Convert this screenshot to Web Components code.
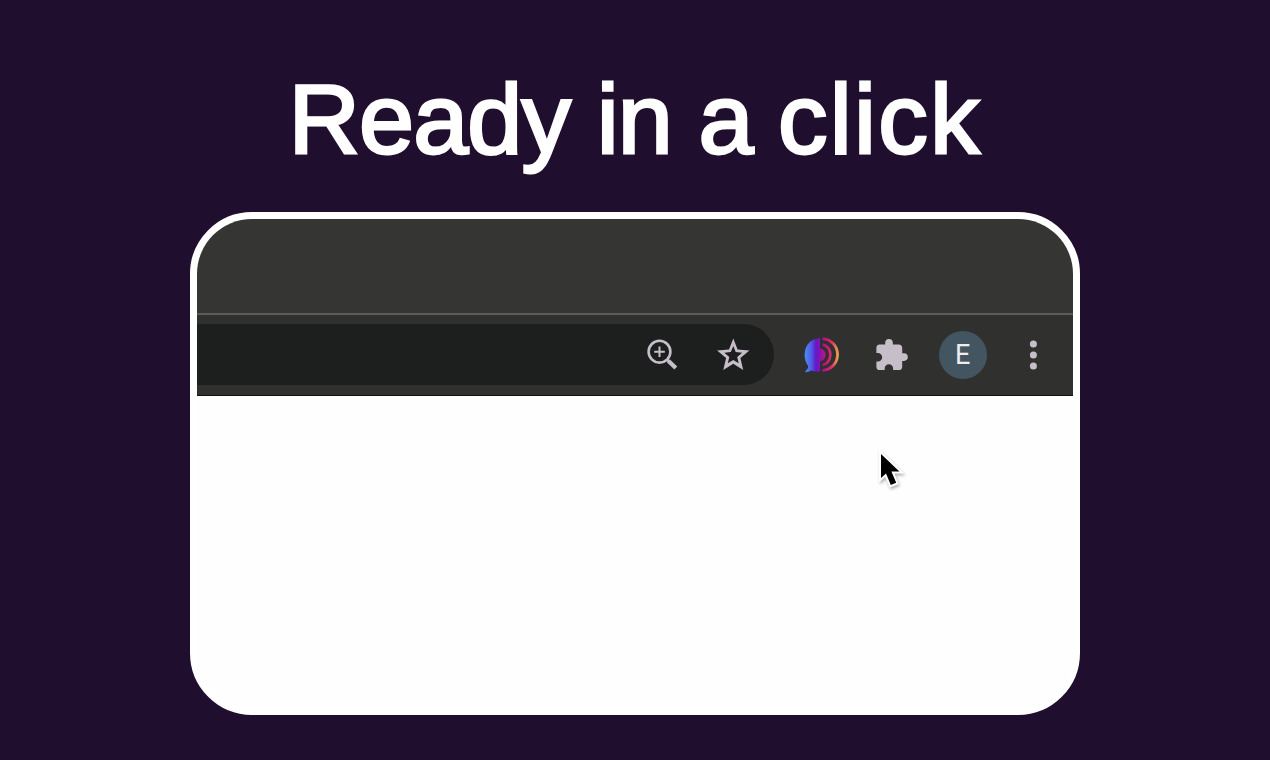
<!DOCTYPE html>
<html lang="en">
<head>
<meta charset="utf-8">
<title>Ready in a click</title>
<style>
    html, body {
        margin: 0;
        height: 100%;
        overflow: hidden;
        background: #200e2f;
        font-family: "Liberation Sans", Arial, sans-serif;
    }
    .wide { letter-spacing: 2.2px; }
    .tight { letter-spacing: -1.5px; }
</style>
</head>
<body>
<promo-slide>
    <promo-title>Ready in <span class="tight">a </span><span class="wide">click</span></promo-title>
    <browser-window>
        <browser-toolbar slot="toolbar">
            <address-bar slot="address">
                <toolbar-icon name="zoom"></toolbar-icon>
                <toolbar-icon name="star"></toolbar-icon>
            </address-bar>
            <toolbar-icon name="voice"></toolbar-icon>
            <toolbar-icon name="puzzle"></toolbar-icon>
            <user-avatar>E</user-avatar>
            <toolbar-icon name="menu"></toolbar-icon>
        </browser-toolbar>
        <mouse-pointer></mouse-pointer>
    </browser-window>
</promo-slide>

<script>
const ICONS = {
    zoom: `
        <svg width="48" height="48" viewBox="0 0 48 48" fill="none" stroke="#c6bec9">
            <circle cx="21.5" cy="20.7" r="10.9" stroke-width="2.6"/>
            <path d="M21.5 15.4v10.6M16.2 20.7h10.6" stroke-width="2"/>
            <path d="M29 28.4l2 2" stroke-width="3"/>
            <path d="M30.5 29.9l7.3 7.2" stroke-width="4.2"/>
        </svg>`,
    star: `
        <svg width="48" height="48" viewBox="0 0 48 48">
            <path fill="#c6bec9" fill-rule="evenodd" d="M24.3 7.6l4.3 10.8 11.8 1-9 7.7 2.8 12-9.9-6.3-10 6.3 2.8-12-9-7.7 11.9-1zM24.3 15l-2.5 6.1-6.5.6 5 4.2-1.5 6.4 5.5-3.4 5.4 3.4-1.5-6.4 5-4.2-6.5-.6z"/>
        </svg>`,
    voice: `
        <svg width="48" height="48" viewBox="0 0 48 48">
            <defs>
                <linearGradient id="g" gradientUnits="userSpaceOnUse" x1="7" y1="0" x2="41" y2="0">
                    <stop offset="0" stop-color="#488cf4"/>
                    <stop offset=".18" stop-color="#515de6"/>
                    <stop offset=".32" stop-color="#6218c8"/>
                    <stop offset=".46" stop-color="#8e14ac"/>
                    <stop offset=".62" stop-color="#c8147c"/>
                    <stop offset=".8" stop-color="#e03468"/>
                    <stop offset=".92" stop-color="#e6884e"/>
                    <stop offset="1" stop-color="#e8ad55"/>
                </linearGradient>
            </defs>
            <path fill="url(#g)" d="M22 7v10.2q5.6 1.4 5.6 6.6T22 30.4v10.2q-5 .6-9-1-2.4 1.8-5.4 1.6-.8-1 .4-1.8 2.8-2 2.2-4.4-3.6-4.6-3.6-11.2Q7 9 22 7z"/>
            <g fill="none" stroke="url(#g)">
                <path d="M24.6 13.6c4.7.7 7.7 5.1 7.7 10.1s-3 9.4-7.7 10.3" stroke-width="2.6"/>
                <path d="M24.5 7.8C32.8 7.8 39.5 15 39.5 23.6S32.8 39 24.5 39.4" stroke-width="2.8"/>
            </g>
        </svg>`,
    puzzle: `
        <svg width="48" height="48" viewBox="0 0 48 48">
            <path fill="#c6bec9" d="M36 22.3h-1.8v-5.6c0-1.8-1.4-3.2-3.2-3.2h-6.2v-1.7a3.8 3.8 0 0 0-7.6 0v1.7h-5.7c-1.8 0-3.1 1.4-3.1 3.2v5.2h1.5a4.3 4.3 0 0 1 0 8.6H8.4v5.4c0 1.8 1.3 3.2 3.1 3.2h5.2v-1.7a4.2 4.2 0 0 1 8.4 0v1.7H31c1.8 0 3.2-1.4 3.2-3.2v-6H36a3.8 3.8 0 0 0 0-7.6z"/>
        </svg>`,
    menu: `
        <svg width="48" height="48" viewBox="0 0 48 48" fill="#c6bec9">
            <circle cx="24.4" cy="12.9" r="3.5"/>
            <circle cx="24.4" cy="24" r="3.5"/>
            <circle cx="24.4" cy="35" r="3.5"/>
        </svg>`
};

class PromoSlide extends HTMLElement {
    constructor() {
        super();
        this.attachShadow({ mode: 'open' }).innerHTML = `
            <style>
                :host {
                    display: flex;
                    flex-direction: column;
                    align-items: center;
                    box-sizing: border-box;
                    width: 1270px;
                    height: 760px;
                    padding-top: 59px;
                    gap: 33px;
                    background: #200e2f;
                }
            </style>
            <slot></slot>
        `;
    }
}

class PromoTitle extends HTMLElement {
    constructor() {
        super();
        this.attachShadow({ mode: 'open' }).innerHTML = `
            <style>
                :host {
                    display: block;
                    height: 120px;
                }
                h1 {
                    margin: 0;
                    font-size: 99px;
                    font-weight: 400;
                    line-height: 120px;
                    letter-spacing: -0.9px;
                    white-space: nowrap;
                    color: #fff;
                    -webkit-text-stroke: 2.8px #fff;
                }
            </style>
            <h1><slot></slot></h1>
        `;
    }
}

class BrowserWindow extends HTMLElement {
    constructor() {
        super();
        this.attachShadow({ mode: 'open' }).innerHTML = `
            <style>
                :host {
                    display: flex;
                    flex-direction: column;
                    position: relative;
                    box-sizing: border-box;
                    width: 890px;
                    height: 503px;
                    border: 7px solid #fff;
                    border-radius: 62px;
                    overflow: hidden;
                    background: #fefefe;
                }
                .tabs {
                    height: 94px;
                    background: #353533;
                    border-bottom: 2px solid #5b5b59;
                }
            </style>
            <div class="tabs"></div>
            <slot name="toolbar"></slot>
            <slot></slot>
        `;
    }
}

class BrowserToolbar extends HTMLElement {
    constructor() {
        super();
        this.attachShadow({ mode: 'open' }).innerHTML = `
            <style>
                :host {
                    display: flex;
                    box-sizing: border-box;
                    height: 81px;
                    padding: 9px 16px 0 0;
                    background: #30302e;
                    border-bottom: 1px solid #111;
                }
                .actions {
                    display: flex;
                    flex: 1;
                    align-items: center;
                    justify-content: space-between;
                    height: 61px;
                    padding-left: 24px;
                }
            </style>
            <slot name="address"></slot>
            <div class="actions"><slot></slot></div>
        `;
    }
}

class AddressBar extends HTMLElement {
    constructor() {
        super();
        this.attachShadow({ mode: 'open' }).innerHTML = `
            <style>
                :host {
                    display: flex;
                    align-items: center;
                    justify-content: flex-end;
                    gap: 23px;
                    box-sizing: border-box;
                    width: 577px;
                    height: 61px;
                    padding-right: 17px;
                    border-radius: 0 31px 31px 0;
                    background: #1d1f1e;
                }
            </style>
            <slot></slot>
        `;
    }
}

class ToolbarIcon extends HTMLElement {
    constructor() {
        super();
        this.attachShadow({ mode: 'open' });
    }

    connectedCallback() {
        this.shadowRoot.innerHTML = `
            <style>
                :host {
                    display: block;
                    width: 48px;
                    height: 48px;
                }
                svg { display: block; }
            </style>
            ${ICONS[this.getAttribute('name')] || ''}
        `;
    }
}

class UserAvatar extends HTMLElement {
    constructor() {
        super();
        this.attachShadow({ mode: 'open' }).innerHTML = `
            <style>
                :host {
                    display: grid;
                    place-items: center;
                    width: 48px;
                    height: 48px;
                    border-radius: 50%;
                    background: #425560;
                    color: #efedf2;
                    font: 400 27px/48px Roboto, sans-serif;
                }
            </style>
            <span><slot></slot></span>
        `;
    }
}

class MousePointer extends HTMLElement {
    constructor() {
        super();
        this.attachShadow({ mode: 'open' }).innerHTML = `
            <style>
                :host {
                    display: block;
                    position: absolute;
                    left: 677px;
                    top: 229px;
                }
                svg {
                    display: block;
                    filter: drop-shadow(1px 2px 1.5px rgba(0, 0, 0, .3));
                }
            </style>
            <svg width="36" height="44" viewBox="0 0 36 44">
                <path d="M7 6v24l5-4.4 4.8 11.4 5.4-2.2-4.8-11.2h8z" fill="#000" stroke="#fff" stroke-width="4" paint-order="stroke"/>
            </svg>
        `;
    }
}

customElements.define('promo-slide', PromoSlide);
customElements.define('promo-title', PromoTitle);
customElements.define('browser-window', BrowserWindow);
customElements.define('browser-toolbar', BrowserToolbar);
customElements.define('address-bar', AddressBar);
customElements.define('toolbar-icon', ToolbarIcon);
customElements.define('user-avatar', UserAvatar);
customElements.define('mouse-pointer', MousePointer);
</script>
</body>
</html>
